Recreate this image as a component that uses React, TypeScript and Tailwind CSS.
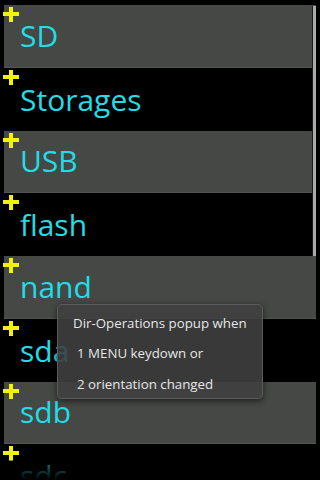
import React from 'react';

const dirs = ['SD', 'Storages', 'USB', 'flash', 'nand', 'sda', 'sdb', 'sdc'];

function Plus() {
  return (
    <div className="absolute left-[3px] top-[2px] w-[16px] h-[15px]">
      <div className="absolute left-0 right-0 top-[5px] h-[4px] bg-[#f2f20a]" />
      <div className="absolute top-0 bottom-0 left-[6px] w-[4px] bg-[#f2f20a]" />
    </div>
  );
}

function DirRow({ name, shaded }: { name: string; shaded: boolean }) {
  return (
    <div className="relative h-[62.75px] shrink-0 flex">
      <div
        className={
          shaded
            ? 'flex-1 ml-[4px] mr-[4px] bg-[#464846] border-b border-[#535553] flex items-end'
            : 'flex-1 ml-[4px] mr-[4px] flex items-end'
        }
      >
        <span className="pl-[16px] pb-[13px] text-[30px] leading-[36px] text-[#20dde6]">{name}</span>
      </div>
      <Plus />
    </div>
  );
}

export default function App() {
  return (
    <div
      className="relative w-[320px] h-[480px] overflow-hidden bg-black"
      style={{ fontFamily: '"Open Sans", "Noto Sans", sans-serif' }}
    >
      <div className="flex flex-col pt-[5px]">
        {dirs.map((d, i) => (
          <DirRow key={d} name={d} shaded={i % 2 === 0} />
        ))}
      </div>

      {/* scrollbar */}
      <div className="absolute left-[312px] top-[6px] w-[4px] h-[250px] bg-[#a9aba9] border-l border-[#1a1a1a]" />

      {/* bottom fading edge */}
      <div className="absolute left-0 right-0 bottom-0 h-[20px] bg-gradient-to-b from-black/40 to-black" />

      {/* toast popup */}
      <div className="absolute left-[57px] top-[304px] w-[206px] h-[95px] rounded-[5px] bg-[#3e3f3e]/90 border border-[#5a5b5a] shadow-[0_2px_6px_rgba(0,0,0,0.6)] flex flex-col text-[13.3px] text-[#e6e6e6]">
        <div className="h-[31px] pt-[9px] pl-[15px] leading-[18px]">Dir-Operations popup when</div>
        <div className="h-[31px] pt-[8px] pl-[19px] leading-[18px]">1 MENU keydown or</div>
        <div className="h-[31px] pt-[8px] pl-[19px] leading-[18px]">2 orientation changed</div>
      </div>
    </div>
  );
}
